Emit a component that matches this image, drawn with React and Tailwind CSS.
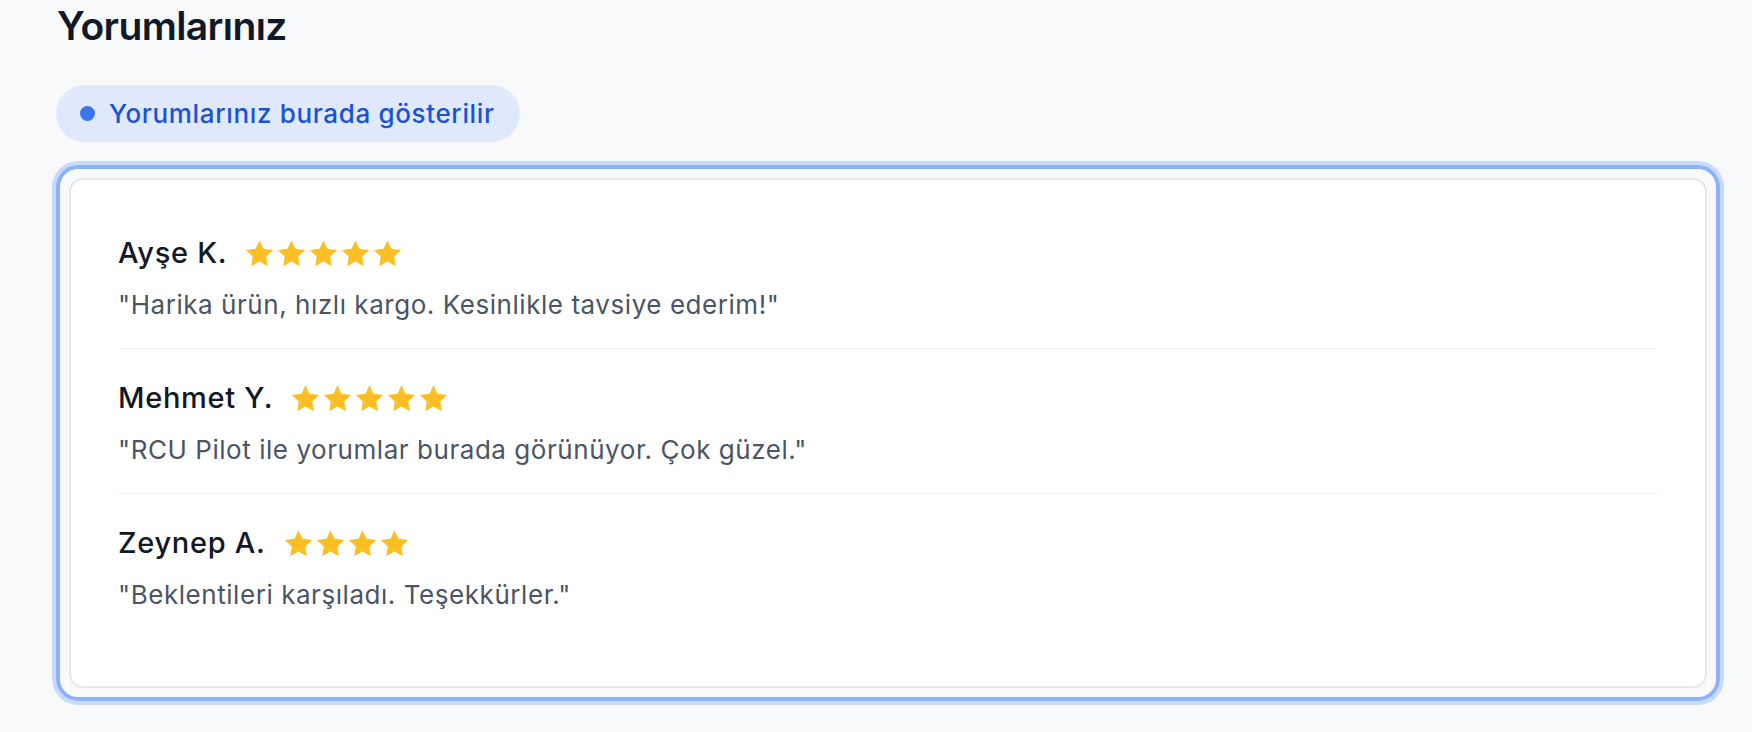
import React from "react";

const Star = () => (
  <svg viewBox="0 0 24 24" className="w-[29px] h-[29px] shrink-0" fill="#fbbf24">
    <polygon points="12 1 15.3 8 23.3 9.1 17.5 14.6 18.9 22.5 12 18.7 5.1 22.5 6.5 14.6 0.7 9.1 8.7 8" />
  </svg>
);

const reviews = [
  { name: "Ayşe K.", stars: 5, text: '"Harika ürün, hızlı kargo. Kesinlikle tavsiye ederim!"' },
  { name: "Mehmet Y.", stars: 5, text: '"RCU Pilot ile yorumlar burada görünüyor. Çok güzel."' },
  { name: "Zeynep A.", stars: 4, text: '"Beklentileri karşıladı. Teşekkürler."' },
];

export default function App() {
  return (
    <div
      className="h-[732px] w-full overflow-hidden bg-[#f8f9fb] pl-[56px] pt-[2px]"
      style={{ fontFamily: "Inter, 'Noto Sans', sans-serif" }}
    >
      <div className="w-[1664px]">
        <h1 className="text-[39px] leading-[47px] font-semibold tracking-[-0.6px] text-[#111827] pl-[1px]">
          Yorumlarınız
        </h1>
        <div className="mt-[36px] inline-flex items-center gap-[14px] rounded-full bg-[#e0e9fb] pl-[24px] pr-[25px] py-[9px]">
          <span className="w-[15px] h-[15px] rounded-full bg-[#3b76ea]" />
          <span className="text-[26px] leading-[39px] font-medium tracking-[0.65px] text-[#1a52d4]">
            Yorumlarınız burada gösterilir
          </span>
        </div>
        <div className="mt-[23px] rounded-[22px] border-[4px] border-[#8cb2fb] shadow-[0_0_0_4px_#c8dbfd] p-[9px]">
          <div className="rounded-[14px] border-2 border-[#e5e7eb] bg-white px-[47px] pt-[55px] pb-[72px]">
            {reviews.map((r, i) => (
              <div
                key={r.name}
                className={
                  (i > 0 ? "pt-[31px] " : "") +
                  (i < reviews.length - 1 ? "pb-[24px] border-b border-[#f1f2f4]" : "")
                }
              >
                <div className="flex items-center gap-[18px]">
                  <span className="text-[29px] leading-[36px] font-medium tracking-[0.7px] text-[#111827]">
                    {r.name}
                  </span>
                  <div className="flex items-center gap-[3px]">
                    {Array.from({ length: r.stars }).map((_, k) => (
                      <Star key={k} />
                    ))}
                  </div>
                </div>
                <p className="mt-[14px] text-[26px] leading-[39px] tracking-[0.55px] text-[#4b5563]">{r.text}</p>
              </div>
            ))}
          </div>
        </div>
      </div>
    </div>
  );
}
